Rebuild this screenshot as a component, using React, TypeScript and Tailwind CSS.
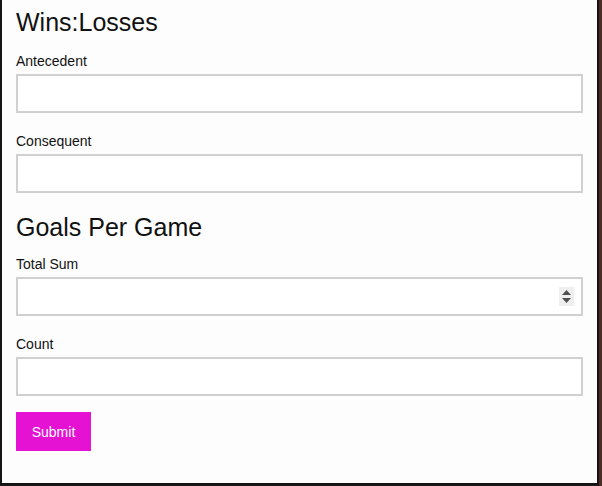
import React, { useState } from "react";

function Field({
	label,
	value,
	onChange,
	spinner,
	className,
}: {
	label: string;
	value: string;
	onChange: (v: string) => void;
	spinner?: boolean;
	className?: string;
}) {
	return (
		<div className={"flex flex-col " + (className || "")}>
			<label className="text-[14px] leading-[18px] text-[#111]">{label}</label>
			<div className="relative mt-[4px]">
				<input
					type="text"
					value={value}
					onChange={(e) => onChange(e.target.value)}
					className="w-full h-[39px] px-2 bg-white border-2 border-[#d0d0d0] outline-none text-[14px]"
				/>
				{spinner && (
					<div className="absolute right-[9px] top-[10px] w-[15px] h-[19px] bg-[#efefef] flex flex-col items-center justify-center gap-[3px]">
						<svg width="9" height="5" viewBox="0 0 9 5">
							<path d="M4.5 0 L9 5 L0 5 Z" fill="#505050" />
						</svg>
						<svg width="9" height="5" viewBox="0 0 9 5">
							<path d="M0 0 L9 0 L4.5 5 Z" fill="#505050" />
						</svg>
					</div>
				)}
			</div>
		</div>
	);
}

export default function App() {
	const [antecedent, setAntecedent] = useState("");
	const [consequent, setConsequent] = useState("");
	const [totalSum, setTotalSum] = useState("");
	const [count, setCount] = useState("");

	return (
		<div
			className="w-[602px] h-[486px] bg-[#1c1c1c] flex overflow-hidden"
			style={{ fontFamily: '"Liberation Sans", Arial, sans-serif' }}
		>
			<div className="w-[599px] h-[485px] bg-[#fdfdfd] border-l-2 border-r-2 border-b-2 border-[#141414] pl-[14px] pr-[14px] pt-[8px]">
				<h2 className="text-[25px] leading-[29px] text-[#111]">Wins:Losses</h2>
				<Field
					label="Antecedent"
					value={antecedent}
					onChange={setAntecedent}
					className="mt-[15px]"
				/>
				<Field
					label="Consequent"
					value={consequent}
					onChange={setConsequent}
					className="mt-[19px]"
				/>
				<h2 className="mt-[20px] text-[25px] leading-[29px] text-[#111]">
					Goals Per Game
				</h2>
				<Field
					label="Total Sum"
					value={totalSum}
					onChange={setTotalSum}
					spinner
					className="mt-[13px]"
				/>
				<Field
					label="Count"
					value={count}
					onChange={setCount}
					className="mt-[19px]"
				/>
				<button
					onClick={() => console.log({ antecedent, consequent, totalSum, count })}
					className="mt-[16px] w-[75px] h-[39px] pt-[1px] bg-[#e512d4] text-white text-[14px]"
				>
					Submit
				</button>
			</div>
			<div className="w-[3px] h-full bg-[#4e2b27]" />
		</div>
	);
}
